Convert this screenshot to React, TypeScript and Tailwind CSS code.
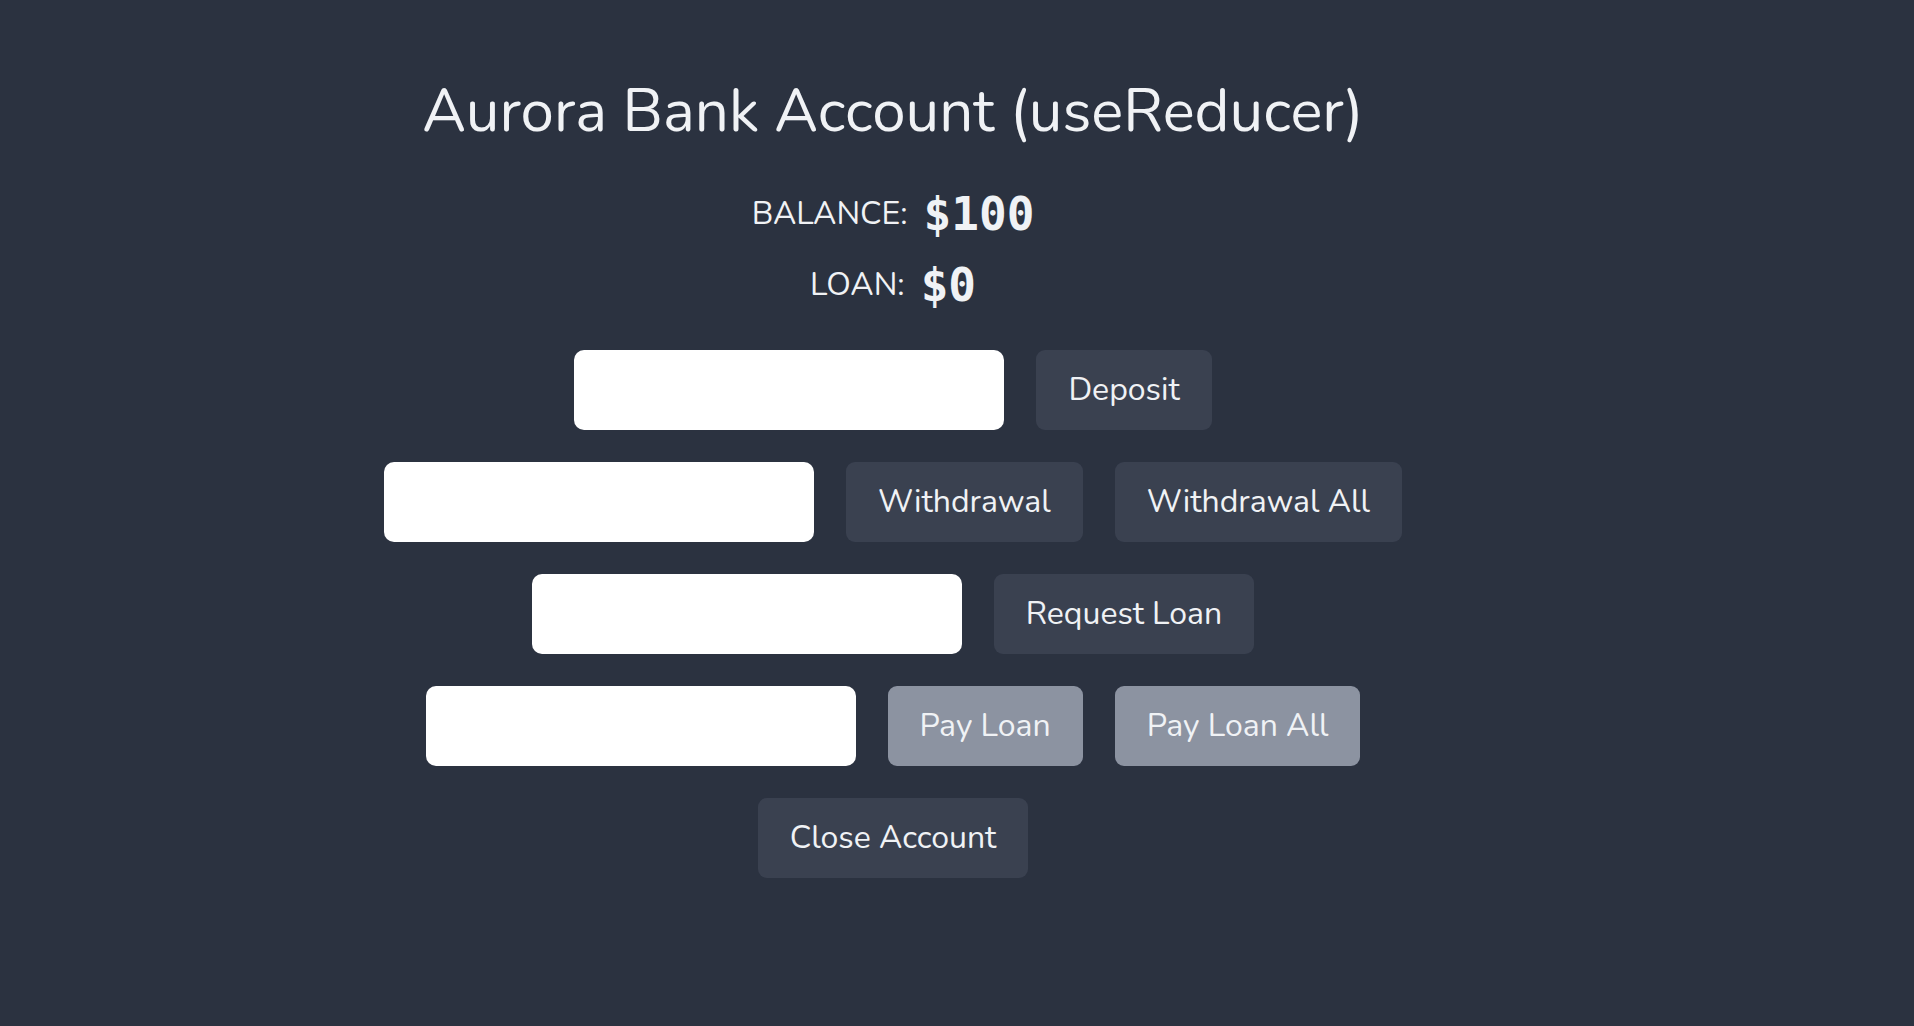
import React, { useReducer, useState } from 'react';

type State = { balance: number; loan: number; isActive: boolean };
type Action =
  | { type: 'deposit'; payload: number }
  | { type: 'withdraw'; payload: number }
  | { type: 'withdrawAll' }
  | { type: 'requestLoan'; payload: number }
  | { type: 'payLoan'; payload: number }
  | { type: 'payLoanAll' }
  | { type: 'close' };

const initialState: State = { balance: 100, loan: 0, isActive: true };

function reducer(state: State, action: Action): State {
  switch (action.type) {
    case 'deposit':
      return { ...state, balance: state.balance + action.payload };
    case 'withdraw':
      return { ...state, balance: state.balance - action.payload };
    case 'withdrawAll':
      return { ...state, balance: 0 };
    case 'requestLoan':
      if (state.loan > 0) return state;
      return { ...state, loan: action.payload, balance: state.balance + action.payload };
    case 'payLoan':
      return { ...state, loan: state.loan - action.payload, balance: state.balance - action.payload };
    case 'payLoanAll':
      return { ...state, balance: state.balance - state.loan, loan: 0 };
    case 'close':
      return initialState;
    default:
      return state;
  }
}

const font = "font-['Nunito','Lato',sans-serif]";
const btn =
  'h-[80px] px-[32px] rounded-[9px] bg-[#3a4150] text-[32px] text-[#f0f2f5] disabled:bg-[#8c93a1] disabled:cursor-not-allowed';
const inputCls = 'h-[80px] w-[430px] rounded-[10px] bg-white px-4 text-[28px] text-gray-800 outline-none';
const mono = "font-['DejaVu_Sans_Mono',monospace] text-[46px] leading-none font-bold";

export default function App() {
  const [{ balance, loan }, dispatch] = useReducer(reducer, initialState);
  const [deposit, setDeposit] = useState('');
  const [withdraw, setWithdraw] = useState('');
  const [request, setRequest] = useState('');
  const [pay, setPay] = useState('');

  return (
    <div className={`min-h-screen bg-[#2b3240] ${font} text-[#f0f2f5]`}>
      <div className="w-[1786px] flex flex-col items-center pt-[75px]">
        <h1 className="text-[60px] leading-[72px]">Aurora Bank Account (useReducer)</h1>

        <div className="mt-[42px] h-[50px] flex items-center gap-[16px]">
          <span className="text-[32px] uppercase">Balance:</span>
          <span className={mono}>${balance}</span>
        </div>
        <div className="mt-[21px] h-[50px] flex items-center gap-[16px]">
          <span className="text-[32px] uppercase">Loan:</span>
          <span className={mono}>${loan}</span>
        </div>

        <div className="mt-[40px] flex flex-col items-center gap-[32px]">
          <div className="flex gap-[32px]">
            <input className={inputCls} value={deposit} onChange={e => setDeposit(e.target.value)} />
            <button className={btn} onClick={() => dispatch({ type: 'deposit', payload: Number(deposit) || 0 })}>
              Deposit
            </button>
          </div>
          <div className="flex gap-[32px]">
            <input className={inputCls} value={withdraw} onChange={e => setWithdraw(e.target.value)} />
            <button className={btn} onClick={() => dispatch({ type: 'withdraw', payload: Number(withdraw) || 0 })}>
              Withdrawal
            </button>
            <button className={btn} onClick={() => dispatch({ type: 'withdrawAll' })}>
              Withdrawal All
            </button>
          </div>
          <div className="flex gap-[32px]">
            <input className={inputCls} value={request} onChange={e => setRequest(e.target.value)} />
            <button className={btn} onClick={() => dispatch({ type: 'requestLoan', payload: Number(request) || 0 })}>
              Request Loan
            </button>
          </div>
          <div className="flex gap-[32px]">
            <input className={inputCls} value={pay} onChange={e => setPay(e.target.value)} />
            <button className={btn} disabled={loan === 0} onClick={() => dispatch({ type: 'payLoan', payload: Number(pay) || 0 })}>
              Pay Loan
            </button>
            <button className={btn} disabled={loan === 0} onClick={() => dispatch({ type: 'payLoanAll' })}>
              Pay Loan All
            </button>
          </div>
          <button className={btn} onClick={() => dispatch({ type: 'close' })}>
            Close Account
          </button>
        </div>
      </div>
    </div>
  );
}
